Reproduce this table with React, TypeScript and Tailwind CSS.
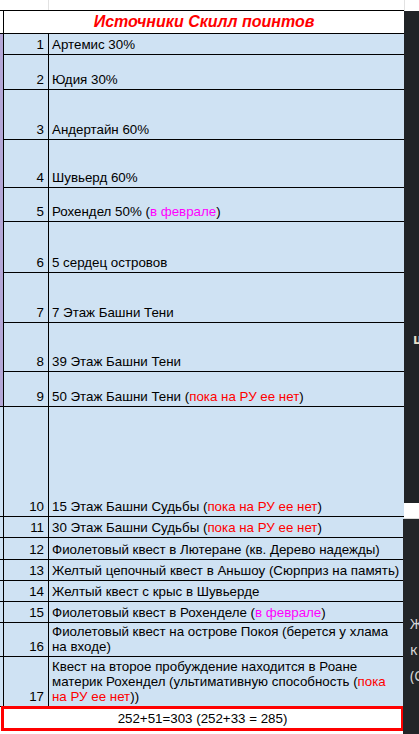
import React from 'react';

type Row = {
  n: number;
  h: number;
  strip: 'purple' | 'blue';
  stripLine?: boolean;
  content: React.ReactNode;
};

const Red = ({ children }: { children: React.ReactNode }) => <span className="text-[#ff0000]">{children}</span>;
const Pink = ({ children }: { children: React.ReactNode }) => <span className="text-[#ff00ff]">{children}</span>;

const rows: Row[] = [
  { n: 1, h: 21, strip: 'purple', content: 'Артемис 30%' },
  { n: 2, h: 35, strip: 'purple', content: 'Юдия 30%' },
  { n: 3, h: 50, strip: 'purple', content: 'Андертайн 60%' },
  { n: 4, h: 48, strip: 'purple', content: 'Шувьерд 60%' },
  { n: 5, h: 34, strip: 'purple', content: <>Рохендел 50% (<Pink>в феврале</Pink>)</> },
  { n: 6, h: 51, strip: 'purple', content: '5 сердец островов' },
  { n: 7, h: 50, strip: 'purple', content: '7 Этаж Башни Тени' },
  { n: 8, h: 49, strip: 'purple', content: '39 Этаж Башни Тени' },
  { n: 9, h: 35, strip: 'purple', stripLine: true, content: <>50 Этаж Башни Тени (<Red>пока на РУ ее нет</Red>)</> },
  { n: 10, h: 110, strip: 'blue', stripLine: true, content: <>15 Этаж Башни Судьбы (<Red>пока на РУ ее нет</Red>)</> },
  { n: 11, h: 21, strip: 'blue', stripLine: true, content: <>30 Этаж Башни Судьбы (<Red>пока на РУ ее нет</Red>)</> },
  { n: 12, h: 22, strip: 'blue', stripLine: true, content: 'Фиолетовый квест в Лютеране (кв. Дерево надежды)' },
  { n: 13, h: 21, strip: 'blue', stripLine: true, content: 'Желтый цепочный квест в Аньшоу (Сюрприз на память)' },
  { n: 14, h: 21, strip: 'blue', stripLine: true, content: 'Желтый квест с крыс в Шувьерде' },
  { n: 15, h: 21, strip: 'blue', stripLine: true, content: <>Фиолетовый квест в Рохенделе (<Pink>в феврале</Pink>)</> },
  {
    n: 16,
    h: 34,
    strip: 'blue',
    stripLine: true,
    content: <>Фиолетовый квест на острове Покоя (берется у хлама<br />на входе)</>,
  },
  {
    n: 17,
    h: 50,
    strip: 'blue',
    stripLine: true,
    content: (
      <>
        Квест на второе пробуждение находится в Роане
        <br />
        материк Рохендел (ультимативную способность (<Red>пока</Red>
        <br />
        <Red>на РУ ее нет</Red>))
      </>
    ),
  },
];

const SheetRow = ({ row }: { row: Row }) => (
  <div className="flex" style={{ height: row.h }}>
    <div
      className={`w-[3px] ${row.strip === 'purple' ? 'bg-[#b4a7d6]' : 'bg-[#cfe2f3]'} ${row.stripLine ? 'border-b border-black' : ''}`}
    />
    <div className="w-[46px] border-x border-b border-black bg-[#cfe2f3] flex items-end justify-end pr-[4px] pb-[2px] leading-[15px]">
      {row.n}
    </div>
    <div className="flex-1 border-b border-black bg-[#cfe2f3] flex items-end pl-[3px] pb-[2px] leading-[15px] whitespace-nowrap">
      <div>{row.content}</div>
    </div>
  </div>
);

export default function App() {
  return (
    <div className="w-[419px] h-[734px] overflow-hidden bg-white flex text-[13.33px] text-black font-['Liberation_Sans',Arial,sans-serif]">
      <div className="w-[404px] flex flex-col">
        <div className="h-[10px] flex">
          <div className="w-[49px] border-r border-[#e2e2e2]" />
          <div className="flex-1" />
        </div>
        <div className="h-[24px] flex border-y border-black">
          <div className="w-[3px] bg-white" />
          <div className="flex-1 border-l border-black flex items-center justify-center text-[16px] font-bold italic text-[#ff0000] leading-none">
            Источники Скилл поинтов
          </div>
        </div>
        {rows.map((r) => (
          <SheetRow key={r.n} row={r} />
        ))}
        <div className="-mt-px ml-px w-[403px] h-[25px] border-[3px] border-[#ff0000] bg-white flex items-center justify-center leading-none">
          252+51=303 (252+33 = 285)
        </div>
      </div>
      <div className="flex-1 flex flex-col">
        <div className="h-[11px] border-l border-[#e2e2e2] bg-white" />
        <div className="h-[492px] bg-[#202326] pt-[318px] pl-[9px] text-[14px] font-bold text-[#e6dfc8] leading-[20px] font-['Noto_Sans',sans-serif] overflow-hidden">
          ш
        </div>
        <div className="h-[16px] bg-white border-b border-[#d8d8d8]" />
        <div className="flex-1 -ml-px bg-[#222528] pt-[92px] pl-[7px] text-[14px] text-[#d6d6d6] leading-[26px] font-['Noto_Sans',sans-serif] overflow-hidden whitespace-nowrap">
          <div>Ж</div>
          <div>к</div>
          <div>(С</div>
        </div>
      </div>
    </div>
  );
}
